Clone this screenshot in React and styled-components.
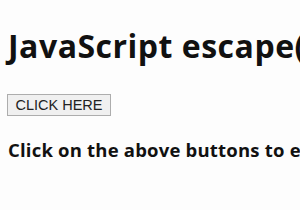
import React from "react";
import styled, { createGlobalStyle } from "styled-components";

const Global = createGlobalStyle`
  html, body { margin: 0; padding: 0; background: #fdfdfd; }
  body { overflow: hidden; }
`;

const Page = styled.div`
  padding: 8px;
  width: 300px;
  height: 210px;
  box-sizing: border-box;
  overflow: hidden;
  white-space: nowrap;
  font-family: "Open Sans", "Noto Sans", sans-serif;
  color: #111;
`;

const Title = styled.h1`
  margin: 18px 0 0;
  font-size: 32px;
  line-height: 40px;
  font-weight: 700;
  letter-spacing: 0.5px;
`;

const Button = styled.button`
  margin-top: 28px;
  display: block;
  height: 22px;
  width: 104px;
  margin-left: -1px;
  padding: 0;
  font-family: "Liberation Sans", Arial, sans-serif;
  font-size: 14.5px;
  color: #222;
  background: #f0f0f0;
  border: 1px solid #adadad;
  border-radius: 0;
`;

const Note = styled.p`
  margin: 22px 0 0;
  font-size: 18.5px;
  line-height: 24px;
  font-weight: 700;
  letter-spacing: 0.2px;
`;

export default function App() {
  return (
    <>
      <Global />
      <Page>
        <Title>JavaScript escape() Function</Title>
        <Button>CLICK HERE</Button>
        <Note>Click on the above buttons to escape the string</Note>
      </Page>
    </>
  );
}
